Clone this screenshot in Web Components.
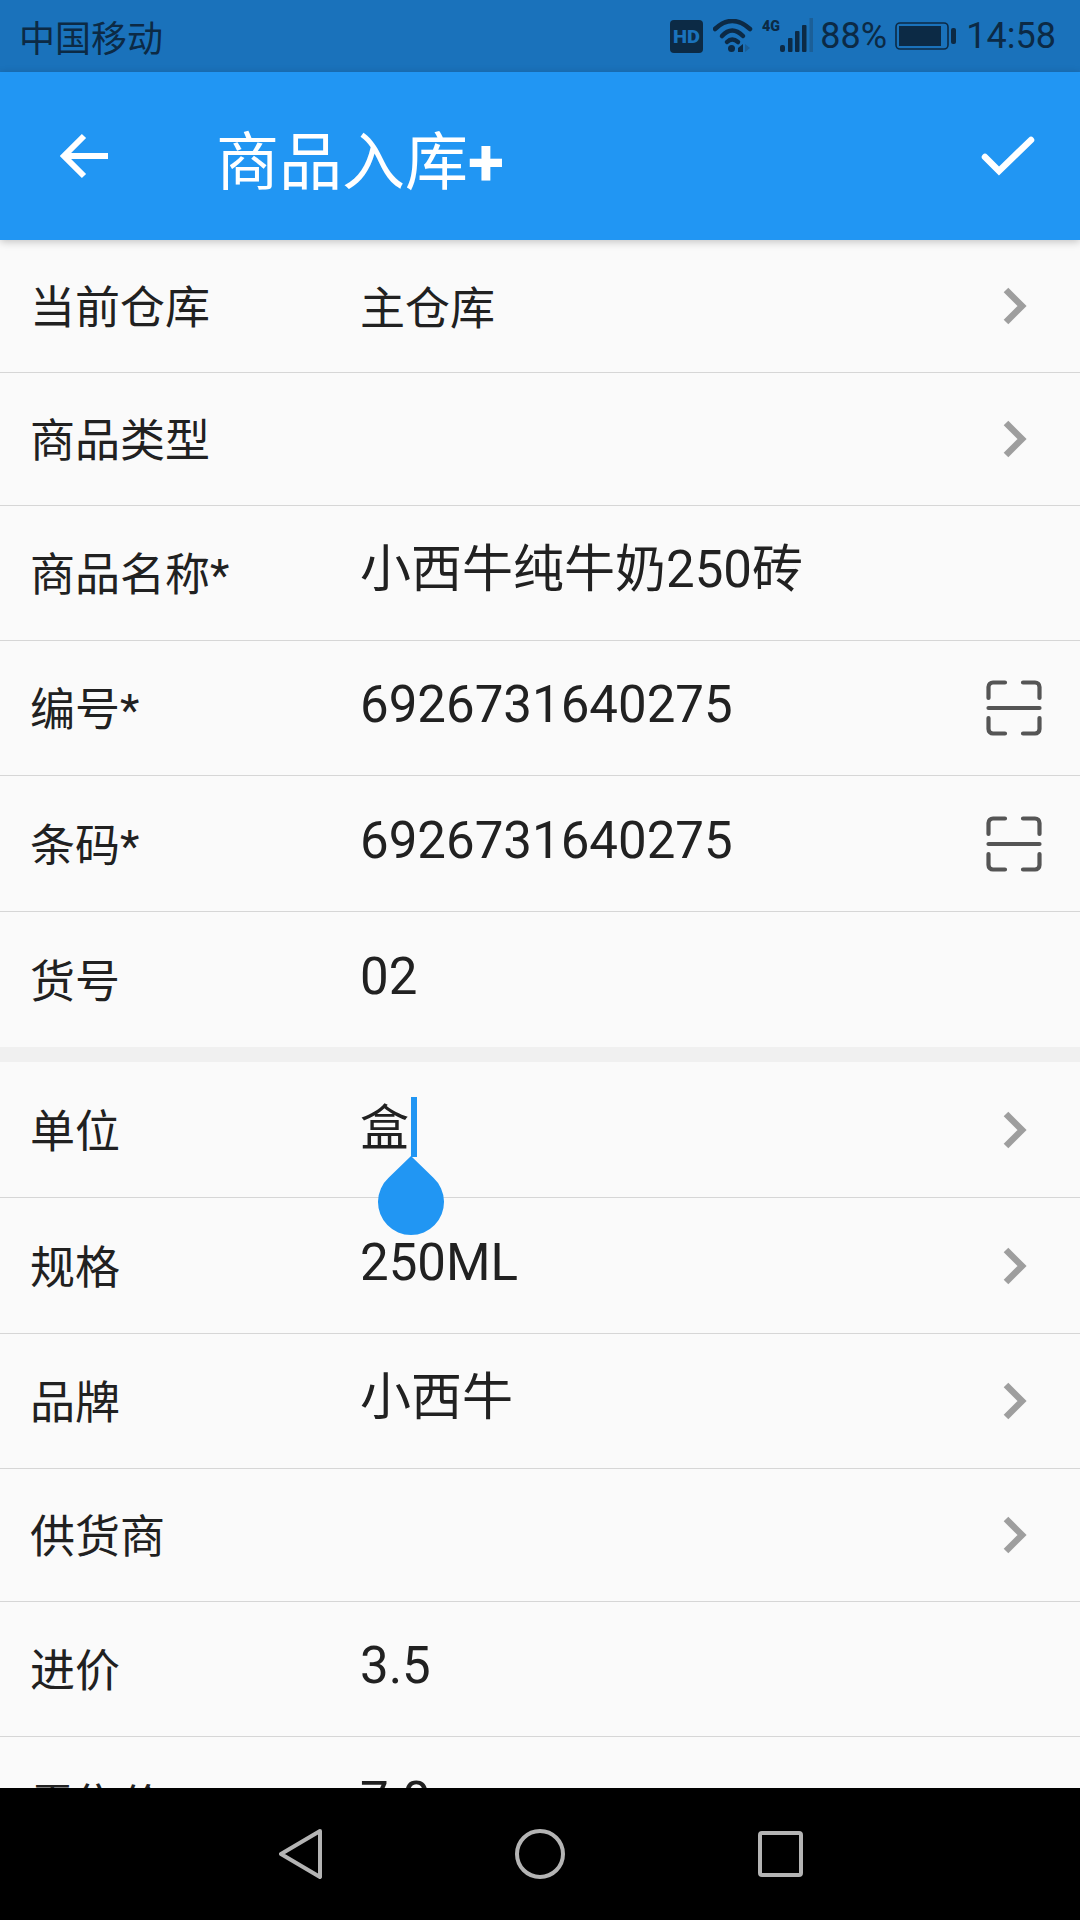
<!DOCTYPE html>
<html lang="zh">
<head>
<meta charset="utf-8">
<title>商品入库+</title>
<style>
  html, body { margin: 0; padding: 0; height: 100%; }
  body {
    width: 1080px;
    height: 1920px;
    overflow: hidden;
    background: #fafafa;
    font-family: Roboto, "Noto Sans CJK SC", sans-serif;
  }
  stock-screen { height: 1920px; }
</style>
</head>
<body>
<stock-screen>
  <status-bar slot="top"></status-bar>
  <app-header slot="top" title="商品入库"></app-header>

  <form-row label="当前仓库" value="主仓库" small action="chevron" style="--h:133px"></form-row>
  <form-row label="商品类型" action="chevron" style="--h:133px"></form-row>
  <form-row label="商品名称*" value="小西牛纯牛奶250砖" style="--h:135px"></form-row>
  <form-row label="编号*" value="6926731640275" action="scan" style="--h:135px"></form-row>
  <form-row label="条码*" value="6926731640275" action="scan" style="--h:136px"></form-row>
  <form-row label="货号" value="02" last style="--h:135px"></form-row>
  <section-gap></section-gap>
  <form-row label="单位" value="盒" action="chevron" caret style="--h:136px"></form-row>
  <form-row label="规格" value="250ML" action="chevron" style="--h:136px"></form-row>
  <form-row label="品牌" value="小西牛" action="chevron" style="--h:135px"></form-row>
  <form-row label="供货商" action="chevron" style="--h:133px"></form-row>
  <form-row label="进价" value="3.5" style="--h:135px"></form-row>
  <form-row label="零售价" value="7.0" style="--h:135px"></form-row>

  <nav-bar slot="bottom"></nav-bar>
</stock-screen>

<script>
class StockScreen extends HTMLElement {
  constructor() {
    super();
    this.attachShadow({ mode: 'open' });
  }

  connectedCallback() {
    this.shadowRoot.innerHTML = `
      <style>
        :host {
          display: flex;
          flex-direction: column;
          width: 1080px;
          overflow: hidden;
        }
        .top { display: block; flex: none; position: relative; z-index: 2; }
        .body { flex: 1; min-height: 0; overflow: hidden; }
        .bottom { display: block; flex: none; position: relative; z-index: 2; }
      </style>
      <div class="top"><slot name="top"></slot></div>
      <div class="body"><slot></slot></div>
      <div class="bottom"><slot name="bottom"></slot></div>
    `;
  }
}

class StatusBar extends HTMLElement {
  constructor() {
    super();
    this.attachShadow({ mode: 'open' });
  }

  connectedCallback() {
    this.shadowRoot.innerHTML = `
      <style>
        :host {
          display: flex;
          align-items: center;
          justify-content: space-between;
          box-sizing: border-box;
          height: 72px;
          padding: 0 24px 0 19px;
          background: #1a72bb;
          color: #0c2a45;
        }
        .carrier { font: 36px/1 "Noto Sans CJK SC", sans-serif; }
        .icons { display: flex; align-items: center; }
        svg { display: block; flex: none; }
        .pct { font: 36px/1 Roboto, sans-serif; width: 64px; margin: 0 11px 0 6px; white-space: nowrap; }
        .time { font: 36px/1 Roboto, sans-serif; margin-left: 10px; }
      </style>
      <span class="carrier">中国移动</span>
      <div class="icons">
        <svg width="33" height="33" viewBox="0 0 33 33" style="margin-right:10px">
          <rect width="33" height="33" rx="4" fill="#0c2a45"/>
          <text x="16.500" y="23" text-anchor="middle" font-family="Roboto" font-weight="900" font-size="19" textLength="27" lengthAdjust="spacingAndGlyphs" fill="#1a72bb">HD</text>
        </svg>
        <svg width="40" height="34" viewBox="0 0 40 34" style="margin-right:9px">
          <g fill="none" stroke="#0c2a45" stroke-width="4.500" stroke-linecap="round">
            <path d="M2 10 Q19 -6 37 10"/>
            <path d="M9 17 Q19 6 30 17"/>
            <path d="M14 23 Q19 18 25 23"/>
          </g>
          <circle cx="18.500" cy="29.500" r="3.500" fill="#0c2a45"/>
          <path d="M25 29 l5 -4 v8 h-5 z" fill="#0c2a45"/>
          <path d="M32 25 l5 4 l-5 4 z" fill="#1b5f98"/>
        </svg>
        <svg width="52" height="36" viewBox="0 0 52 36">
          <text x="0" y="13" font-family="Roboto" font-weight="900" font-size="15" textLength="18" lengthAdjust="spacingAndGlyphs" fill="#0c2a45">4G</text>
          <rect x="18" y="27" width="5" height="7" rx="2" fill="#0c2a45"/>
          <rect x="26" y="20" width="4.500" height="14" rx="1" fill="#0c2a45"/>
          <rect x="33" y="13" width="4.500" height="21" rx="1" fill="#0c2a45"/>
          <rect x="40" y="7" width="4.500" height="27" rx="1" fill="#0c2a45"/>
          <rect x="47.500" y="0" width="3.500" height="34" fill="#1b5f98"/>
        </svg>
        <span class="pct">88%</span>
        <svg width="61" height="30" viewBox="0 0 61 30">
          <rect x="1" y="2" width="52" height="26" rx="4" fill="none" stroke="#0c2a45" stroke-width="1.600"/>
          <rect x="4" y="5" width="42" height="20" fill="#0c2a45"/>
          <rect x="56" y="7" width="5" height="16" rx="2" fill="#0c2a45"/>
        </svg>
        <span class="time">14:58</span>
      </div>
    `;
  }
}

class AppHeader extends HTMLElement {
  constructor() {
    super();
    this.attachShadow({ mode: 'open' });
  }

  connectedCallback() {
    this.shadowRoot.innerHTML = `
      <style>
        :host {
          display: flex;
          align-items: center;
          box-sizing: border-box;
          height: 168px;
          background: #2196f3;
          color: #fff;
          box-shadow: 0 2px 8px rgba(0, 0, 0, 0.22);
        }
        svg { display: block; flex: none; }
        .back { margin-left: 60px; }
        h1 {
          flex: 1;
          margin: 0 0 0 106px;
          font: 400 63px/1 "Noto Sans CJK SC", sans-serif;
        }
        h1 b { font: 700 66px/0 Roboto, sans-serif; vertical-align: -1px; }
        .ok { margin-right: 44px; }
      </style>
      <svg class="back" width="50" height="48" viewBox="0 0 50 48">
        <path d="M48 24H5M24 4L4 24l20 20" fill="none" stroke="#fff" stroke-width="6"/>
      </svg>
      <h1>${this.getAttribute('title')}<b>+</b></h1>
      <svg class="ok" width="55" height="42" viewBox="0 0 55 42">
        <path d="M4 22l14 14L50 5" fill="none" stroke="#fff" stroke-width="6.500" stroke-linecap="round"/>
      </svg>
    `;
  }
}

class FormRow extends HTMLElement {
  constructor() {
    super();
    this.attachShadow({ mode: 'open' });
  }

  actionMarkup() {
    const action = this.getAttribute('action');
    if (action === 'chevron') {
      return `<svg class="chevron" width="24" height="38" viewBox="0 0 24 38">
        <path d="M3 3l16 16L3 35" fill="none" stroke="#9e9e9e" stroke-width="6.500"/>
      </svg>`;
    }
    if (action === 'scan') {
      return `<svg class="scan" width="56" height="56" viewBox="0 0 56 56">
        <g fill="none" stroke="#555" stroke-width="4.200" stroke-linecap="round">
          <path d="M19 2.500H7A4.500 4.500 0 0 0 2.500 7v11"/>
          <path d="M37 2.500H49A4.500 4.500 0 0 1 53.500 7v11"/>
          <path d="M2.500 28h51"/>
          <path d="M2.500 38v11A4.500 4.500 0 0 0 7 53.500H19"/>
          <path d="M53.500 38v11A4.500 4.500 0 0 1 49 53.500H37"/>
        </g>
      </svg>`;
    }
    return '';
  }

  connectedCallback() {
    const value = this.getAttribute('value') || '';
    const caret = this.hasAttribute('caret') ? '<text-handle></text-handle>' : '';
    this.shadowRoot.innerHTML = `
      <style>
        :host {
          display: flex;
          align-items: center;
          box-sizing: border-box;
          height: var(--h, 134px);
          padding-left: 30px;
          border-bottom: 1px solid #d6d6d6;
          color: #212121;
          font-family: Roboto, "Noto Sans CJK SC", sans-serif;
        }
        :host([last]) { border-bottom: none; }
        .label { flex: none; width: 330px; font-size: 45px; line-height: 1; padding-top: 5px; }
        .value { flex: 1; font-size: 51px; line-height: 1; padding-bottom: 7px; }
        :host([small]) .value { font-size: 45px; padding: 6px 0 0; }
        :host([caret]) .value { font-size: 49px; padding: 0 0 3px; }
        .text { position: relative; display: inline-block; }
        svg { display: block; flex: none; }
        .chevron { margin-right: 53px; }
        .scan { margin-right: 38px; }
      </style>
      <span class="label">${this.getAttribute('label')}</span>
      <div class="value"><span class="text">${value}${caret}</span></div>
      ${this.actionMarkup()}
    `;
  }
}

class SectionGap extends HTMLElement {
  constructor() {
    super();
    this.attachShadow({ mode: 'open' });
  }

  connectedCallback() {
    this.shadowRoot.innerHTML = `
      <style>
        :host { display: block; height: 15px; background: #f0f0f0; }
      </style>
    `;
  }
}

// cursor and drag handle lie over the row below, so they are placed on top of the text
class TextHandle extends HTMLElement {
  constructor() {
    super();
    this.attachShadow({ mode: 'open' });
  }

  connectedCallback() {
    this.shadowRoot.innerHTML = `
      <style>
        :host {
          position: absolute;
          left: 11px;
          top: -7px;
          width: 80px;
          height: 140px;
        }
        svg { display: block; }
      </style>
      <svg width="80" height="140" viewBox="0 0 80 140">
        <rect x="40" y="0" width="6" height="60" fill="#2196f3"/>
        <path d="M40 59L17.600 80.800A33 33 0 1 0 62.400 80.800Z" fill="#2196f3"/>
      </svg>
    `;
  }
}

class NavBar extends HTMLElement {
  constructor() {
    super();
    this.attachShadow({ mode: 'open' });
  }

  connectedCallback() {
    this.shadowRoot.innerHTML = `
      <style>
        :host {
          display: flex;
          align-items: center;
          gap: 193px;
          box-sizing: border-box;
          height: 132px;
          padding-left: 279px;
          background: #000;
        }
        svg { display: block; flex: none; }
      </style>
      <svg width="43" height="50" viewBox="0 0 43 50">
        <path d="M41 2L2 25l39 23z" fill="none" stroke="#b4b4b4" stroke-width="4" stroke-linejoin="round"/>
      </svg>
      <svg width="50" height="50" viewBox="0 0 50 50">
        <circle cx="25" cy="25" r="23" fill="none" stroke="#b4b4b4" stroke-width="4"/>
      </svg>
      <svg width="45" height="46" viewBox="0 0 45 46">
        <rect x="2" y="2" width="41" height="42" rx="2" fill="none" stroke="#b4b4b4" stroke-width="4"/>
      </svg>
    `;
  }
}

customElements.define('stock-screen', StockScreen);
customElements.define('status-bar', StatusBar);
customElements.define('app-header', AppHeader);
customElements.define('form-row', FormRow);
customElements.define('section-gap', SectionGap);
customElements.define('text-handle', TextHandle);
customElements.define('nav-bar', NavBar);
</script>
</body>
</html>
